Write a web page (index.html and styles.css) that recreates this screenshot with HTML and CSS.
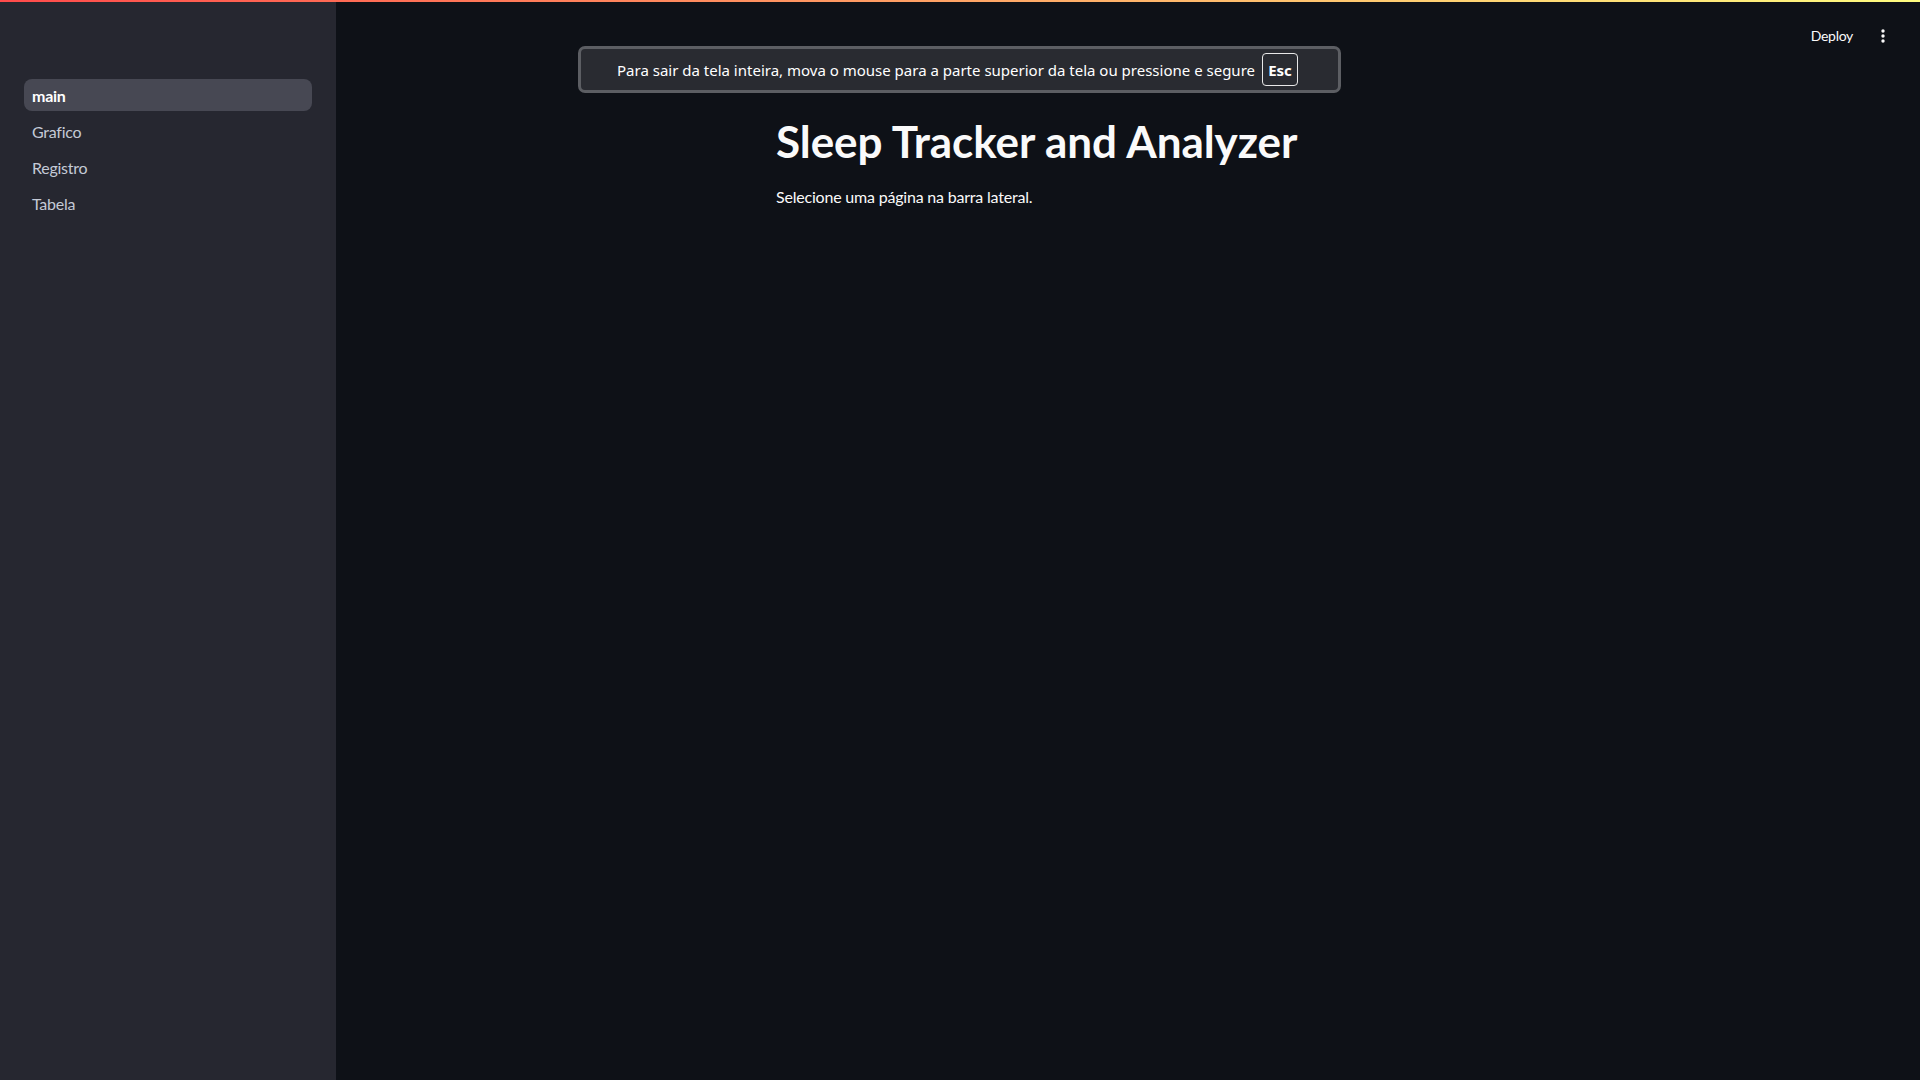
FILE: index.html
```html
<!DOCTYPE html>
<html lang="pt">
<head>
<meta charset="utf-8">
<title>main</title>
<link rel="stylesheet" href="styles.css">
</head>
<body>
<div class="decoration"></div>
<div class="app">
  <aside class="sidebar">
    <nav class="nav">
      <a class="nav-item active">main</a>
      <a class="nav-item">Grafico</a>
      <a class="nav-item">Registro</a>
      <a class="nav-item">Tabela</a>
    </nav>
  </aside>
  <main class="main">
    <header class="toolbar">
      <span class="deploy">Deploy</span>
      <span class="menu">
        <svg width="4" height="14" viewBox="0 0 4 14"><circle cx="2" cy="2" r="1.7" fill="#fafafa"/><circle cx="2" cy="7" r="1.7" fill="#fafafa"/><circle cx="2" cy="12" r="1.7" fill="#fafafa"/></svg>
      </span>
    </header>
    <section class="block">
      <h1 class="title">Sleep Tracker and Analyzer</h1>
      <p class="text">Selecione uma página na barra lateral.</p>
    </section>
  </main>
</div>
<div class="fs-bubble">
  <span class="fs-text">Para sair da tela inteira, mova o mouse para a parte superior da tela ou pressione e segure</span>
  <span class="fs-key">Esc</span>
</div>
</body>
</html>
```

FILE: styles.css
```css
* { box-sizing: border-box; }
html, body { margin: 0; padding: 0; height: 100%; }
body {
  background: #0e1117;
  color: #fafafa;
  font-family: "Lato", "Noto Sans", sans-serif;
  overflow: hidden;
}
.decoration {
  position: fixed;
  top: 0; left: 0; right: 0;
  height: 2px;
  background: linear-gradient(90deg, #ff4b4b, #fffd80);
  z-index: 5;
}
.app {
  display: flex;
  height: 100vh;
}
.sidebar {
  width: 336px;
  flex: none;
  background: #262730;
  padding: 79px 24px 0 24px;
}
.nav {
  display: flex;
  flex-direction: column;
  gap: 4px;
}
.nav-item {
  display: flex;
  align-items: center;
  height: 32px;
  padding: 0 8px;
  border-radius: 8px;
  font-size: 16px;
  letter-spacing: -0.25px;
  color: #c4cad6;
}
.nav-item.active {
  background: #474853;
  color: #ffffff;
  font-weight: 700;
}
.main {
  flex: 1;
  display: flex;
  flex-direction: column;
  align-items: center;
  position: relative;
}
.toolbar {
  align-self: stretch;
  display: flex;
  justify-content: flex-end;
  align-items: center;
  height: 71px;
  margin-bottom: 24px;
  padding: 0 35px 0 0;
  gap: 28px;
}
.deploy {
  font-size: 14px;
  letter-spacing: -0.3px;
  color: #fafafa;
}
.menu { display: flex; align-items: center; height: 16px; }
.block {
  width: 736px;
  padding: 0 16px;
}
.title {
  margin: 0;
  padding: 20px 0 16px;
  font-size: 44px;
  line-height: 1.2;
  font-weight: 700;
  letter-spacing: -0.05px;
}
.text {
  margin: 0;
  font-size: 16px;
  line-height: 1.6;
  letter-spacing: -0.2px;
}
.fs-bubble {
  position: fixed;
  top: 46px;
  left: 578px;
  width: 763px;
  height: 47px;
  border: 3px solid #5c5e63;
  border-radius: 7px;
  background: #292b31;
  display: flex;
  align-items: center;
  padding-left: 36px;
  gap: 7px;
  z-index: 10;
}
.fs-text {
  font-family: "Noto Sans", "Open Sans", sans-serif;
  font-size: 15px;
  letter-spacing: 0;
  color: #ffffff;
}
.fs-key {
  border: 1px solid #e8e8e8;
  border-radius: 4px;
  width: 36px;
  height: 33px;
  display: flex;
  align-items: center;
  justify-content: center;
  font-family: "Noto Sans", "Open Sans", sans-serif;
  font-weight: 700;
  font-size: 15px;
  color: #ffffff;
}
```
